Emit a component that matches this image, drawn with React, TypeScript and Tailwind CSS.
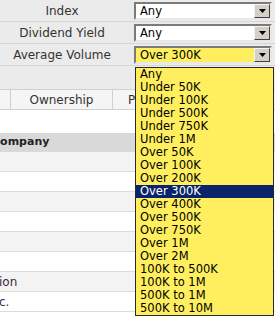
import React from "react";

const items = [
  "Any",
  "Under 50K",
  "Under 100K",
  "Under 500K",
  "Under 750K",
  "Under 1M",
  "Over 50K",
  "Over 100K",
  "Over 200K",
  "Over 300K",
  "Over 400K",
  "Over 500K",
  "Over 750K",
  "Over 1M",
  "Over 2M",
  "100K to 500K",
  "100K to 1M",
  "500K to 1M",
  "500K to 10M",
];

function Arrow() {
  return (
    <div className="w-[16px] h-[14px] bg-[#d4d0c8] border border-t-[#f4f4f4] border-l-[#f4f4f4] border-b-[#404040] border-r-[#404040] flex items-center justify-center">
      <svg width="7" height="4" viewBox="0 0 7 4">
        <path d="M0 0h7L3.5 4z" fill="#000" />
      </svg>
    </div>
  );
}

function Select({ value, yellow }: { value: string; yellow?: boolean }) {
  return (
    <div
      className={`ml-[10px] w-[138px] h-[18px] flex items-center border-2 border-t-[#7b7b7b] border-l-[#7b7b7b] border-b-[#e8e8e8] border-r-[#e8e8e8] ${
        yellow ? "bg-[#ffef5e]" : "bg-white"
      }`}
    >
      <span className="flex-1 pl-[4px] text-[11.5px] leading-[14px] text-black">{value}</span>
      <Arrow />
    </div>
  );
}

function FilterRow({ label, value, yellow }: { label: string; value: string; yellow?: boolean }) {
  return (
    <div className="h-[22px] flex items-center bg-[#ebebeb] border-b border-[#d6d6d6]">
      <div className="w-[124px] text-center text-[12px] text-[#333]">{label}</div>
      <Select value={value} yellow={yellow} />
    </div>
  );
}

export default function App() {
  return (
    <div
      className="relative w-[275px] h-[316px] overflow-hidden bg-white"
      style={{ fontFamily: '"DejaVu Sans", Verdana, sans-serif' }}
    >
      <FilterRow label="Index" value="Any" />
      <FilterRow label="Dividend Yield" value="Any" />
      <FilterRow label="Average Volume" value="Over 300K" yellow />
      <div className="h-[24px] bg-[#ebebeb] border-b border-[#cfcfcf]" />
      <div className="h-[20px] flex bg-[#f5f5f5] border-b border-[#d0d0d0] text-[12px] text-[#333]">
        <div className="w-[11px] border-r border-[#d0d0d0]" />
        <div className="w-[102px] border-r border-[#d0d0d0] flex items-center justify-center">Ownership</div>
        <div className="flex-1 flex items-center pl-[15px] overflow-hidden whitespace-nowrap">Performance</div>
      </div>
      <div className="h-[23px]" />
      <div className="h-[19px] bg-[#d9d9d9] flex items-center text-[11px] font-bold text-[#222]">
        <span className="-ml-[8px]">Company</span>
      </div>
      {Array.from({ length: 8 }).map((_, i) => (
        <div
          key={i}
          className={`h-[20px] border-b border-[#dcdcdc] flex items-center text-[12px] text-[#3a2a3a] ${
            i % 2 === 0 ? "bg-[#f3f3f3]" : "bg-white"
          }`}
        >
          {i === 6 ? <span className="-ml-[1px]">ion</span> : null}
          {i === 7 ? <span className="-ml-[1px]">c.</span> : null}
        </div>
      ))}

      <div className="absolute left-[135px] top-[67px] w-[139px] border border-[#2a2a2a] bg-[#ffef5e]">
        {items.map((t) => (
          <div
            key={t}
            className={`h-[13px] leading-[13px] pl-[4px] text-[11.5px] ${
              t === "Over 300K" ? "bg-[#0a246a] text-white" : "text-black"
            }`}
          >
            {t}
          </div>
        ))}
      </div>
    </div>
  );
}
